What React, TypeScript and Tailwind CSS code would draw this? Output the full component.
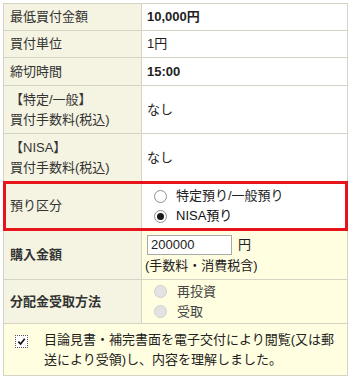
const font = { fontFamily: '"Liberation Sans", "Noto Sans CJK JP", sans-serif' };

function Radio({ checked = false, disabled = false }: { checked?: boolean; disabled?: boolean }) {
  return (
    <span
      className={
        "flex h-[13px] w-[13px] shrink-0 items-center justify-center rounded-full border " +
        (disabled ? "border-[#cfcfcf] bg-[#e3e3e3]" : "border-[#8f8f8f] bg-white")
      }
    >
      {checked && <span className="h-[7px] w-[7px] rounded-full bg-[#1a1a1a]" />}
    </span>
  );
}

function Row({
  label,
  children,
  h,
  bold = false,
  yellow = false,
  last = false,
}: {
  label: React.ReactNode;
  children: React.ReactNode;
  h: string;
  bold?: boolean;
  yellow?: boolean;
  last?: boolean;
}) {
  return (
    <div className={"flex " + h + (last ? "" : " border-b border-[#d5d3c3]")}>
      <div
        className={
          "flex w-[138px] shrink-0 items-center border-r border-[#d5d3c3] bg-[#f5f3e2] pl-[6px] text-[13px] leading-[20px] text-[#333] " +
          (bold ? "font-bold" : "")
        }
      >
        {label}
      </div>
      <div
        className={
          "flex flex-1 items-center pl-[5px] text-[13px] leading-[20px] text-[#222] " +
          (yellow ? "bg-[#fffee0]" : "bg-white")
        }
      >
        {children}
      </div>
    </div>
  );
}

export default function App() {
  return (
    <div className="h-[380px] w-[350px] bg-white" style={font}>
      <div className="ml-[3px] mt-[3px] w-[345px] border border-[#d5d3c3]">
        <Row label="最低買付金額" h="h-[27px]">
          <span className="font-bold">10,000円</span>
        </Row>
        <Row label="買付単位" h="h-[27px]">
          1円
        </Row>
        <Row label="締切時間" h="h-[28px]">
          <span className="font-bold">15:00</span>
        </Row>
        <Row
          label={
            <div>
              <div>【特定/一般】</div>
              <div>買付手数料(税込)</div>
            </div>
          }
          h="h-[48px]"
        >
          なし
        </Row>
        <Row
          label={
            <div>
              <div>【NISA】</div>
              <div>買付手数料(税込)</div>
            </div>
          }
          h="h-[47px]"
          last
        >
          なし
        </Row>

        {/* 預り区分 - highlighted */}
        <div className="-mx-px flex h-[50px] border-[3px] border-[#e8141c]">
          <div className="flex w-[136px] shrink-0 items-center border-r border-[#d5d3c3] bg-[#f5f3e2] pl-[4px] text-[13px] text-[#333]">
            預り区分
          </div>
          <div className="flex flex-1 flex-col justify-center bg-white pl-[12px] text-[13px] leading-[20px] text-[#222]">
            <label className="flex items-center gap-[9px]">
              <Radio />
              特定預り/一般預り
            </label>
            <label className="flex items-center gap-[9px] text-[#111]">
              <Radio checked />
              NISA預り
            </label>
          </div>
        </div>

        <Row label="購入金額" h="h-[49px]" bold yellow>
          <div className="flex flex-col">
            <div className="flex items-center gap-[6px]">
              <span className="flex h-[20px] w-[85px] items-center border border-[#a9a9a9] bg-white pl-[3px] text-[13px]">
                200000
              </span>
              <span>円</span>
            </div>
            <span className="-ml-[2px] mt-[1px]">(手数料・消費税含)</span>
          </div>
        </Row>
        <Row label="分配金受取方法" h="h-[44px]" bold yellow>
          <div className="flex flex-col pl-[7px] text-[#444]">
            <label className="flex items-center gap-[10px]">
              <Radio disabled />
              再投資
            </label>
            <label className="flex items-center gap-[10px]">
              <Radio disabled />
              受取
            </label>
          </div>
        </Row>

        <div className="flex h-[51px] items-start gap-[16px] bg-[#fffee0] pl-[11px] pt-[6px] text-[13px] leading-[20px] text-[#222]">
          <span className="mt-[5px] flex h-[13px] w-[13px] shrink-0 items-center justify-center border border-dotted border-[#555] bg-white">
            <svg viewBox="0 0 10 10" className="h-[9px] w-[9px]">
              <path d="M1.5 5.2 L4 7.8 L8.6 2" fill="none" stroke="#111" strokeWidth="1.9" />
            </svg>
          </span>
          <span className="w-[300px]">目論見書・補完書面を電子交付により閲覧(又は郵送により受領)し、内容を理解しました。</span>
        </div>
      </div>
    </div>
  );
}
